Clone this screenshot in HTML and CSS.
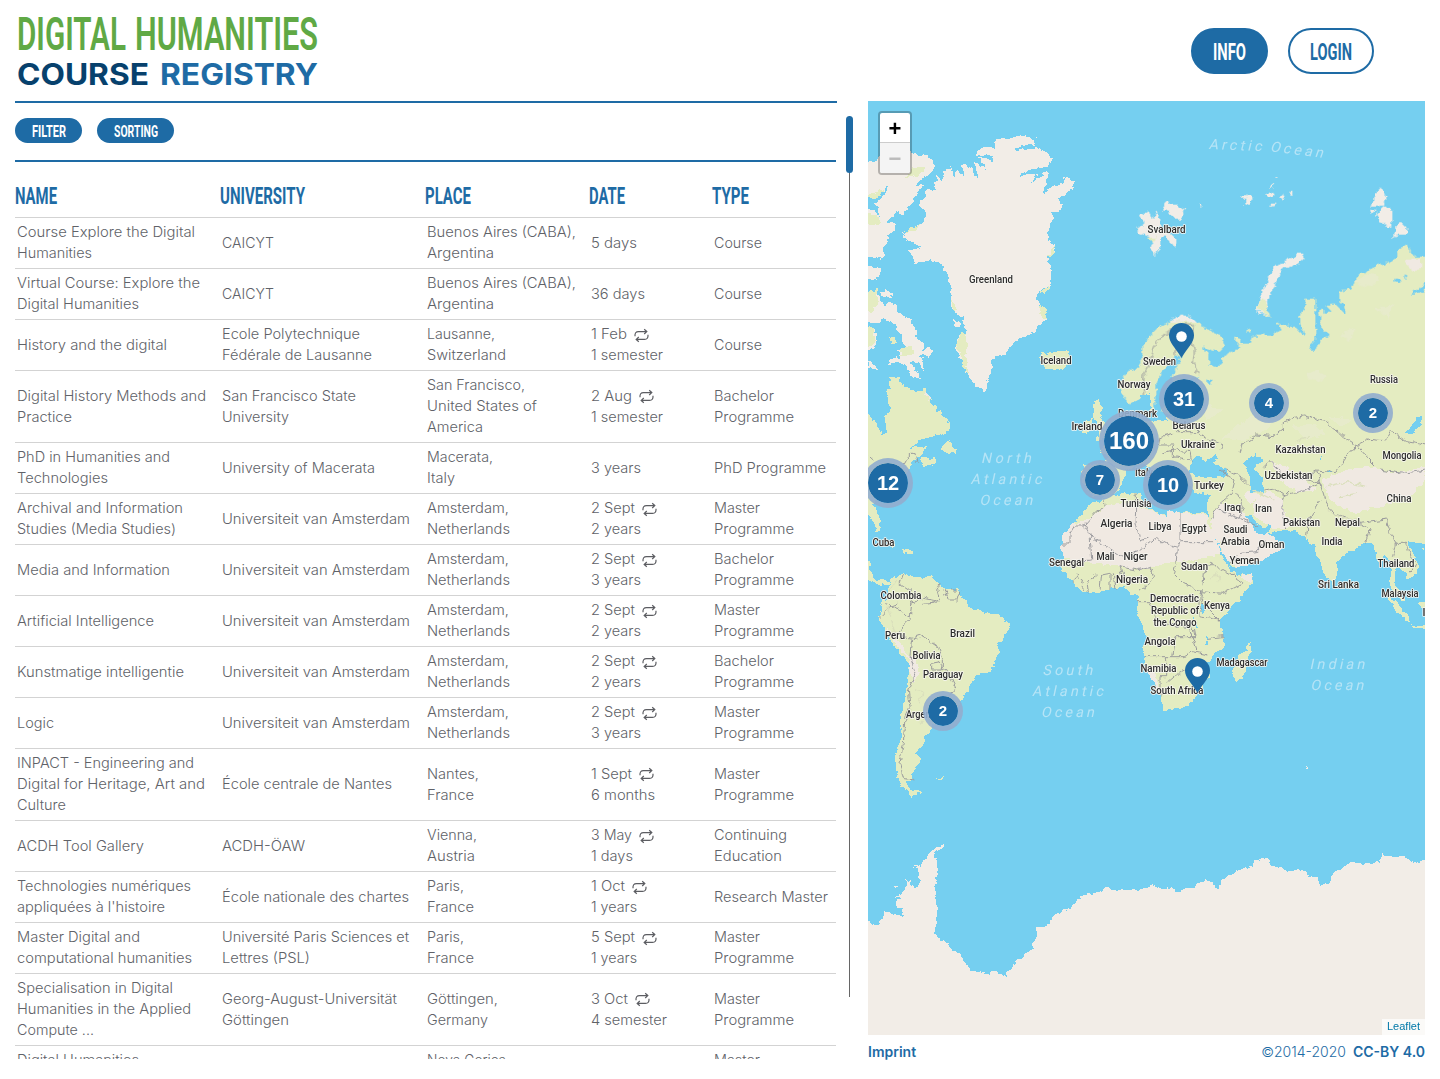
FILE: index.html
```html
<!DOCTYPE html>
<html lang="en">
<head>
<meta charset="utf-8">
<title>Digital Humanities Course Registry</title>
<link rel="stylesheet" href="styles.css">
</head>
<body>
<div class="page">
<main class="left">
  <svg class="logo" viewBox="0 0 304 76" aria-label="Digital Humanities Course Registry">
    <text class="logo-top" x="2" y="37" textLength="109" lengthAdjust="spacingAndGlyphs">DIGITAL</text>
    <text class="logo-top" x="120" y="37" textLength="183" lengthAdjust="spacingAndGlyphs">HUMANITIES</text>
    <text class="logo-course" x="2" y="71.5" textLength="132" lengthAdjust="spacingAndGlyphs">COURSE</text>
    <text class="logo-registry" x="145" y="71.5" textLength="158" lengthAdjust="spacingAndGlyphs">REGISTRY</text>
  </svg>
  <div class="listing">
    <div class="tools">
      <button class="pill"><svg width="34" height="16"><text x="0" y="14" textLength="34" lengthAdjust="spacingAndGlyphs">FILTER</text></svg></button>
      <button class="pill"><svg width="44" height="16"><text x="0" y="14" textLength="44" lengthAdjust="spacingAndGlyphs">SORTING</text></svg></button>
    </div>
    <div class="row head">
      <svg class="h" height="30"><text x="0" y="24" textLength="42" lengthAdjust="spacingAndGlyphs">NAME</text></svg>
      <svg class="h" height="30"><text x="0" y="24" textLength="85" lengthAdjust="spacingAndGlyphs">UNIVERSITY</text></svg>
      <svg class="h" height="30"><text x="0" y="24" textLength="46" lengthAdjust="spacingAndGlyphs">PLACE</text></svg>
      <svg class="h" height="30"><text x="0" y="24" textLength="36" lengthAdjust="spacingAndGlyphs">DATE</text></svg>
      <svg class="h" height="30"><text x="0" y="24" textLength="37" lengthAdjust="spacingAndGlyphs">TYPE</text></svg>
    </div>
    <div id="rows"></div>
  </div>
  <div class="scroll"><div class="thumb"></div></div>
</main>
<aside class="right">
  <nav>
    <button class="big solid"><svg width="34" height="26"><text x="0" y="21.5" textLength="33" lengthAdjust="spacingAndGlyphs">INFO</text></svg></button>
    <button class="big"><svg width="42" height="26"><text x="0" y="21.5" textLength="42" lengthAdjust="spacingAndGlyphs">LOGIN</text></svg></button>
  </nav>
  <div class="map">
    <svg class="world" viewBox="2604 303 1671 2802">
      <defs>
        <filter id="coast" filterUnits="userSpaceOnUse" x="2500" y="200" width="1900" height="3000" color-interpolation-filters="sRGB">
          <feTurbulence type="fractalNoise" baseFrequency=".055" numOctaves="2" seed="4" result="n"/>
          <feDisplacementMap in="SourceGraphic" in2="n" scale="20" xChannelSelector="R" yChannelSelector="G"/>
        </filter>
      </defs>
      <rect x="2604" y="303" width="1671" height="2802" fill="#75cff0"/>
      <g filter="url(#coast)">
      <!-- Greenland, Iceland and the Canadian Arctic -->
      <g transform="translate(2580 285)">
        <path class="ice" d="M372 888L345 870 325 845 305 800 292 775 290 740 298 718 318 712 308 690 312 665 290 655 275 640 272 600 268 550 250 515 232 500 210 497 185 500 165 503 158 485 143 470 180 462 183 452 150 440 128 425 135 410 185 385 198 370 197 345 175 328 195 300 207 283 225 293 222 265 232 243 245 262 255 225 275 215 282 250 290 225 312 245 308 208 325 212 345 240 358 255 350 225 340 195 365 215 375 230 365 200 350 185 385 190 400 198 395 182 345 178 355 162 375 155 408 160 402 145 412 130 440 132 470 120 500 125 525 132 528 148 490 152 455 168 500 165 530 155 548 165 575 190 565 210 545 218 510 225 485 232 470 248 500 238 530 235 515 265 545 245 555 232 565 240 552 295 580 270 610 262 615 248 645 262 635 285 605 305 590 315 610 325 595 350 572 350 580 365 568 400 565 440 580 450 588 470 570 475 562 490 572 510 578 545 575 570 540 585 530 610 545 650 560 670 548 685 520 712 490 725 465 738 440 775 405 785 395 800 385 860 378 885Z"/>
        <path class="green" d="M290 745L300 718 315 712 322 760 318 790 328 850 305 800ZM275 610L288 640 278 645ZM132 410L185 386 165 410ZM541 625L560 650 558 670 540 660ZM540 590L572 570 560 590ZM562 490L580 455 588 470Z"/>
        <path class="ice" d="M0 208L45 200 60 180 100 185 150 168 165 178 180 185 195 175 210 190 224 212 215 235 190 250 165 272 190 265 180 290 155 320 140 350 125 360 110 348 95 365 85 380 105 385 100 410 85 425 78 450 65 460 78 480 65 495 45 485 0 490ZM0 520L50 515 65 525 60 545 45 556 0 550ZM60 588L80 586 95 605 75 608 62 600ZM0 595L50 585 60 610 75 635 90 620 108 635 115 655 150 670 165 700 170 730 190 745 190 768 205 755 221 765 210 785 180 778 200 830 170 800 150 800 182 852 160 845 135 815 115 800 85 808 90 792 120 785 115 765 140 755 125 735 120 710 95 680 70 672 55 685 0 680ZM0 692L45 700 50 745 35 765 0 790ZM24 795L45 812 55 825 35 820 24 822ZM280 672L300 685 298 700 282 692Z"/>
        <path class="green" d="M0 595L50 585 55 620 35 650 0 655ZM0 692L42 700 45 745 0 780ZM0 345L55 362 60 390 0 390ZM135 250L155 220 195 215 180 240ZM0 305L70 285 60 310 0 325ZM92 728L105 728 103 748 90 745ZM125 760L145 755 165 775 140 785 120 780Z"/>
        <path class="sea" d="M10 316L60 302 85 270 75 300 45 325 60 360 10 330Z"/>
        <path class="green" d="M541 770L560 780 585 770 620 768 632 785 628 800 610 820 588 826 560 820 540 808 555 800 541 790Z"/>
        <path class="green" d="M82 848L118 850 130 875 150 880 152 905 172 918 195 885 210 910 232 960H95L80 910 92 880ZM700 918L718 912 728 938 720 965H706Z"/>
      </g>
      <!-- Arctic islands and northern Eurasia -->
      <g transform="translate(3420 285)">
        <path class="green" d="M-65 870L-40 830-5 820 5 790 12 745 30 720 60 695 90 680 120 662 150 665 172 685 210 705 245 725 257 750 240 770 215 765 190 755 205 785 205 810 225 815 245 805 250 780 275 770 305 755 285 740 285 722 298 728 302 745 330 745 335 725 365 720 395 722 425 705 408 678 430 690 470 700 495 725 478 685 480 655 497 640 498 612 525 612 525 680 530 720 505 765 525 768 540 735 570 725 565 710 545 705 538 650 550 635 555 655 575 650 560 630 585 625 618 660 612 630 598 622 598 590 635 583 650 548 700 518 735 505 770 490 775 465 800 448 822 485 900 484V960H0L5 910-30 925-50 905Z"/>
        <path class="ice" d="M90 680L120 659 150 663 172 685 140 680ZM0 358L28 350 35 372 50 348 55 362 62 400 95 418 110 440 105 455 90 445 82 425 65 425 60 455 48 482 40 470 28 460 40 445 30 425 0 415-15 400 10 385ZM65 345L80 322 110 330 135 345 125 370 105 372 95 355ZM178 332L190 328 185 335ZM300 312L325 300 340 305 330 325 310 332 320 312ZM375 300L395 290 405 298 392 310ZM385 275L402 265 395 280ZM405 245L412 242 410 250ZM415 310L428 296 435 308 425 320ZM445 295L460 285 460 302ZM388 330L410 322 400 335ZM355 330L365 328ZM695 335L705 295 722 278 740 310 735 332ZM708 355L730 335 758 345 757 390 745 395 715 375ZM690 340L705 345 696 356ZM758 430L768 400 778 375 803 400 800 418 775 420ZM348 640L362 600 385 555 405 515 430 500 475 475 490 475 494 490 470 510 430 520 415 545 402 575 385 610 380 640 395 665 370 662Z"/>
        <path class="green" d="M350 635L362 610 378 615 380 640 395 665 370 660ZM25 430L50 422 38 440ZM320 705L332 700 330 712ZM770 485L785 455 805 455 800 480Z"/>
        <path class="sand" d="M795 495L840 490 845 520 815 528Z"/>
        <path class="hill" d="M495 845L530 825 560 840 545 860ZM640 560L700 530 720 560 680 575ZM700 640L760 630 750 670ZM600 720L640 700 630 740Z"/>
        <path class="sea" d="M50 865L60 835 90 810 105 780 125 785 120 800 95 840 105 865 180 845 170 858 100 885 60 960H40ZM200 850L215 855 215 870 205 868ZM225 912L238 915 232 920ZM762 550L785 555 778 565 765 562ZM792 540L803 545 797 550ZM812 598L875 550V575L830 598ZM10 905L25 900 18 915Z"/>
        <path class="border" d="M10 905L12 840 30 800 45 750 60 725 80 715 100 700 130 690 160 690M160 690L155 730 163 770 160 800 175 840M105 780L108 740 95 705"/>
      </g>
      <!-- Europe, Asia and Africa -->
      <g transform="translate(3420 1170)">
        <path class="green" d="M-15 75L80 90 100 70V0H900V460L825 458 805 455 820 490 835 520 830 550 810 570 800 555 790 540 770 530 765 545 762 575 775 600 795 625 795 640 780 620 755 600 748 575 755 545 748 510 735 500 715 515 705 480 690 455 665 458 640 480 615 495 592 515 590 550 575 580 560 565 545 530 530 490 525 460 510 465 500 445 475 425 440 422 410 425 385 430 410 450 432 465 410 490 350 515 290 535 275 535 262 505 240 470 215 425 200 395 205 385 200 340 212 315 190 310 165 305 150 290 90 280 60 310 30 230 0 220-40 240-60 300-90 322-150 315-175 270-170 220-115 225-95 205-120 180-80 140Z"/>
        <path class="green" d="M-237 465L-228 430-200 400-175 375-150 340-110 325-60 315-10 308 5 318 0 345 40 360 75 375 100 360 120 365 200 370 215 430 235 480 270 540 285 555 340 548 335 580 290 640 250 680 240 690 245 720 252 750 250 775 215 800 200 830 208 860 190 890 160 930 135 950 70 960 60 920 35 870 15 820 10 790 18 740 0 690-10 665-8 640-10 615-30 615-55 590-95 600-155 610-180 600-200 575-230 545-240 525-228 500Z"/>
        <path class="sand" d="M-237 465L-228 430-200 400-150 385-105 350-30 335 0 350 40 365 75 375 100 360 120 367 200 375 220 435 245 485 220 500 100 515 0 540-100 525-228 505ZM215 390L240 340 280 345 318 380 345 425 385 430 410 450 432 465 410 490 350 515 290 535 262 505 215 425ZM340 340L380 300 430 330 430 370 460 400 440 420 395 415 340 375ZM390 215L440 230 530 300 480 310 430 280ZM550 270L620 240 690 230 760 250 855 230V270L810 320 720 350 640 370 570 330ZM300 555L340 548 330 580ZM20 840L45 850 65 925 35 870ZM330 300L310 320 330 340 365 320Z"/>
        <path class="hill" d="M240 150L300 100 380 50 420 60 380 120 310 150ZM560 80L640 90 600 110ZM460 110L520 100 560 130 500 150ZM180 40L250 60 200 90Z"/>
        <path class="green" d="M283 830L300 790 315 785 328 757 334 780 310 865 290 872 275 860ZM560 565L572 560 590 575 585 592ZM735 610L770 640 808 680 808 697 775 670ZM810 703L855 708 900 710V720L820 710ZM838 640L875 625V665L842 655ZM765 595L795 620 795 640 770 615ZM838 478L850 475 848 488ZM-140 45L-125 30-120 50-130 65-110 90-100 120-105 145-130 155-125 120-140 85ZM-170 100L-145 85-145 120-175 130Z"/>
        <path class="sea" d="M0 20L30 10 35 70 75 65 70 90 30 95 0 90ZM150 250L155 210 175 198 195 215 215 205 232 195 235 205 215 215 262 245 255 262 200 262 170 255ZM310 215L350 192 372 212 345 220 350 245 370 260 368 305 330 305 335 275ZM318 378L335 378 350 400 375 412 395 408 385 425 370 435 345 425 330 400ZM795 130L845 70 840 105 820 130ZM535 210L550 195 542 210ZM560 245L575 243 570 250ZM178 655L195 643 190 668ZM160 680L170 715 162 710ZM198 730L205 765 198 770Z"/>
        <path class="border" d="M120 365V455H220M120 455L112 475 50 443 0 480-60 500-150 435-170 400M112 475L108 520 100 550 130 580 180 605 250 610 310 580 270 550 215 520 190 550 185 590M-150 430L-145 510-200 515M-237 462H-210V430L-195 405H-165L-130 365-105 350-108 330M-15 310L-10 360-12 400 0 450 30 440M-50 560L-60 530-10 540 30 530 40 560 20 590 0 600M-120 600L-115 555-90 550-90 600M-80 550L-75 600M-155 610L-160 570-130 555M-200 575L-190 555-170 570-175 600M-10 635H30L50 690 95 705 160 715 165 740 105 740 95 800H10M95 800L130 800 160 785 205 795M80 800V860H60V920M80 880L115 850 160 825M180 610L180 680 240 690M200 745L250 740M150 720L170 780M180 600L190 640 240 690M215 390L235 345 275 310 285 270 240 240M235 360L300 385 355 410M300 385L310 350 290 310M270 520L300 490 350 485 380 450"/>
        <path class="border" d="M300 190L310 160 350 135 400 140 430 120 430 95 490 78 560 95 610 140 650 165 690 145 740 150 755 125 800 155 855 165M650 165L610 210 590 245 530 240 500 270 440 260 390 215 370 235M650 165L680 200 720 240 790 250 855 240M370 300L400 295 430 310 425 370 440 420M430 320L500 300 540 280 555 330 580 370 660 400 690 420 680 460M540 330L505 390 500 440M660 400L740 390 750 430 770 460 760 500M770 460L800 460 810 500 830 520 810 550M100 70L110 125 180 125 190 140 250 165 240 180M100 130L60 140 55 165 100 165 100 200 150 210M60 190L100 180 150 185 155 215M500 270L545 280M530 240L545 290M450 300L430 320M250 235L300 260 330 290"/>
        <path class="relief" d="M560 290L620 275 680 290M600 320L650 310M560 360L610 385 650 390M780 210L820 200M470 150L510 140M210 570L230 550 240 580M340 300L400 330"/>
      </g>
      <!-- The Americas -->
      <g transform="translate(2580 1170)">
        <path class="green" d="M80 0H198L205 35 240 65 270 100 268 125 235 135 180 150 150 175 195 165 190 195 165 210 150 240 100 265 65 290 50 315 40 340 60 385 62 420 50 420 35 380 0 365V50L50 100 65 135 78 120 75 80 95 60ZM180 205L205 205 230 210 215 230 190 228ZM238 180L270 150 275 165 290 178 290 192 260 185ZM80 450L105 465 90 472ZM125 480L158 482 155 490 130 488ZM10 515L33 518 33 550 50 570 80 570 90 580 60 585 10 560ZM90 575L125 548 150 560 215 560 235 580 260 600 290 598 310 625 325 650 375 665 415 675 447 700 445 720 415 765 412 800 395 845 350 855 330 880 325 905 300 935 250 985 215 1010 213 1030 195 1035 190 1070 168 1090 182 1110 165 1140 155 1170 140 1175 150 1200 185 1210 155 1217 125 1190 110 1155 105 1100 120 1060 125 980 140 900 150 820 130 800 100 765 75 720 57 685 65 640 85 620 85 590ZM228 1165L250 1162 240 1170Z"/>
        <path class="sand" d="M145 800L155 880 180 850 165 800ZM75 710L110 765 150 810 130 770ZM190 15L210 30 198 0Z"/>
        <path class="border" d="M24 195L45 215M130 225L150 190 165 190 170 215M130 552L120 580 150 600 155 640 150 690 115 720 130 740 155 745 185 735 235 770 250 810 250 840 215 840 215 820 240 815 275 870 285 890 270 920M155 745L150 800 165 850 145 900 150 950 135 980 130 1060 120 1120 130 1165 160 1170M75 640L100 650 130 670 150 680M60 680L90 650 115 640M190 640L240 635 230 600 240 580M255 600L265 630 290 630 305 605M270 600L285 600M155 640L190 625 240 635"/>
        <path class="relief" d="M95 690L110 740M80 650L95 680M90 600L110 570M165 900L190 905 175 940M180 1000L200 980"/>
      </g>
      <!-- Antarctica -->
      <g transform="translate(2580 2070)">
        <path class="ice" d="M0 685L24 690 50 705 65 685 75 660 95 670 130 683 125 655 105 645 120 620 100 622 135 600 138 570 150 575 160 598 175 580 178 540 162 535 165 525 182 530 190 515 210 490 250 458 255 465 220 495 230 510 230 560 222 585 232 620 235 665 225 735 265 765 310 805 330 838 375 855 400 845 440 858 455 825 520 775 515 760 530 735 530 708 560 712 585 672 640 650 645 630 685 610 730 602 742 588 752 598 800 600 855 598 870 585 910 592 955 604 1000 590 1035 567 1060 587 1080 595 1088 570 1130 545 1175 530 1180 512 1220 505 1232 525 1260 538 1340 546 1345 560 1375 565 1380 590 1410 575 1420 552 1475 515 1515 522 1560 515 1568 487 1572 500 1625 500 1675 522 1695 508 1730 500V1080H0ZM100 592L110 592 108 598ZM266 450L270 450 270 455ZM1335 228L1345 232 1343 238 1335 236Z"/>
      </g>
      </g>
      <g id="labels"></g>
    </svg>
    <div id="pins"></div>
    <div class="zoomctl"><span>+</span><span class="off">−</span></div>
    <div class="credit">Leaflet</div>
  </div>
  <footer><b>Imprint</b><span class="copy">©2014-2020</span><b>CC-BY 4.0</b></footer>
</aside>
</div>
<script src="app.js"></script>
</body>
</html>
```
FILE: styles.css
```css
* { box-sizing: border-box; }
body { margin: 0; background: #fff; font-family: Inter, "Liberation Sans", sans-serif; }
.page { display: flex; height: 1079px; overflow: hidden; }
.left { width: 868px; padding: 13px 15px 0; display: grid; grid-template-columns: 822px 16px; grid-template-rows: 76px 958px; row-gap: 12px; }
svg { overflow: visible; }
.logo { grid-column: 1 / 3; width: 304px; height: 76px; }
.logo text { font-weight: 700; }
.logo .logo-top { font-family: Roboto, sans-serif; font-size: 46.5px; font-weight: 600; fill: #60a945; }
.logo-course, .logo-registry { font-size: 29.5px; }
.logo-course { fill: #07416d; }
.logo-registry { fill: #1e6ba5; }
.listing { overflow: hidden; border-top: 2px solid #1e6ba5; }
.tools { display: flex; align-items: flex-start; gap: 15px; width: 821px; height: 59px; padding-top: 15px; border-bottom: 2px solid #1e6ba5; }
button { font: inherit; border: 0; display: flex; align-items: center; justify-content: center; }
button text, .h text { font-family: Roboto, sans-serif; font-weight: 700; fill: currentColor; }
.pill { height: 25px; padding: 0 16.5px; border-radius: 13px; background: #1e6ba5; color: #fff; font-size: 17px; }
.row { display: grid; grid-template-columns: 205px 205px 164px 123px 124px; align-items: center; width: 821px; border-bottom: 1px solid #d3d3d3; }
.head { height: 56px; color: #1e6ba5; padding-top: 11px; }
.h { width: 120px; font-size: 24px; }
.cell { padding: 4px 2px; font-size: 14px; line-height: 21px; font-weight: 300; color: #66686e; white-space: nowrap; }
.line { display: flex; height: 21px; align-items: center; }
.line svg { display: block; overflow: visible; }
.line text { fill: #606268; }
.repeat { margin: 1px 0 0 7px; fill: none; stroke: #5c5d62; stroke-width: 1.2; }
.scroll { margin: 15px 0 0 9px; width: 7px; height: 881px; background: linear-gradient(#666, #666) 3px 0 / 1px 100% no-repeat; }
.thumb { height: 57px; border-radius: 4px; background: #1e6ba5; }
.right { width: 557px; }
nav { display: flex; justify-content: flex-end; gap: 20px; padding: 28px 51px 0 0; height: 101px; }
.big { width: 86px; height: 46px; padding: 0; border: 2px solid #1e6ba5; border-radius: 23px; background: #fff; color: #1e6ba5; font-size: 24px; }
.solid { width: 77px; background: #1e6ba5; color: #fff; }
.map { position: relative; height: 934px; overflow: hidden; }
.world { display: block; width: 557px; height: 934px; shape-rendering: crispEdges; overflow: hidden; }
.ice { fill: #f2ede7; }
.green { fill: #e4ecc1; }
.sand { fill: #f0e9e2; }
.hill { fill: #e7ebcb; }
.sea { fill: #75cff0; }
.border { fill: none; stroke: #96969a; stroke-width: 2.8; shape-rendering: auto; }
.relief { fill: none; stroke: #dadfbc; stroke-width: 4; shape-rendering: auto; }
.country { font: 500 31px Roboto, sans-serif; fill: #2c2c2c; stroke: #f8f7f2; stroke-width: 5px; stroke-linejoin: round; paint-order: stroke; }
.ocean { font: 400 43px Roboto, sans-serif; fill: #b6e4f6; }
.cluster { position: absolute; display: flex; align-items: center; justify-content: center; border-radius: 50%; background: #1e6ba5; background-clip: padding-box; border: 5px solid rgba(146, 174, 206, .92); color: #fff; font-family: "Liberation Sans", sans-serif; font-weight: 700; line-height: 1; padding-bottom: 1px; }
.pin { position: absolute; width: 25px; height: 35px; }
.zoomctl { position: absolute; left: 10px; top: 10px; width: 34px; height: 64px; border: 2px solid rgba(0, 0, 0, .25); border-radius: 4px; background: #fff; background-clip: padding-box; font: 700 22px/31px "Liberation Sans", sans-serif; text-align: center; overflow: hidden; }
.zoomctl span { display: block; height: 30px; border-bottom: 1px solid #ccc; }
.zoomctl .off { border: 0; background: #f4f4f4; color: #bbb; }
.credit { position: absolute; right: 0; bottom: 0; width: 43px; height: 16px; background: rgba(255, 255, 255, .7); color: #0078a8; font: 11px/15px "Liberation Sans", sans-serif; text-align: center; }
footer { display: flex; padding-top: 7px; font-size: 14px; line-height: 20px; color: #1e6ba5; }
footer b { font-weight: 600; }
.copy { margin: 0 7px 0 auto; font-weight: 300; }
```
FILE: app.js
```js
// Each cell is a list of [text, width] lines; a trailing 1 adds the recurring mark.
const UVA = [["Universiteit van Amsterdam", 188]];
const AMS = [["Amsterdam,", 82], ["Netherlands", 83]];
const MA = [["Master", 46], ["Programme", 80]];
const BA = [["Bachelor", 60], ["Programme", 80]];
const CO = [["Course", 48]];
const FR = ["France", 47];
const S = ["2 Sept", 44, 1];
const BUE = [["Buenos Aires (CABA),", 149], ["Argentina", 67]];
const rows = [
  [[["Course Explore the Digital", 178], ["Humanities", 75]], [["CAICYT", 52]], BUE, [["5 days", 46]], CO],
  [[["Virtual Course: Explore the", 183], ["Digital Humanities", 122]], [["CAICYT", 52]], BUE, [["36 days", 54]], CO],
  [[["History and the digital", 150]], [["Ecole Polytechnique", 138], ["Fédérale de Lausanne", 150]], [["Lausanne,", 68], ["Switzerland", 79]], [["1 Feb", 36, 1], ["1 semester", 72]], CO],
  [[["Digital History Methods and", 189], ["Practice", 55]], [["San Francisco State", 134], ["University", 67]], [["San Francisco,", 98], ["United States of", 110], ["America", 56]], [["2 Aug", 41, 1], ["1 semester", 72]], BA],
  [[["PhD in Humanities and", 153], ["Technologies", 91]], [["University of Macerata", 153]], [["Macerata,", 66], ["Italy", 28]], [["3 years", 50]], [["PhD Programme", 112]]],
  [[["Archival and Information", 166], ["Studies (Media Studies)", 159]], UVA, AMS, [S, ["2 years", 50]], MA],
  [[["Media and Information", 153]], UVA, AMS, [S, ["3 years", 50]], BA],
  [[["Artificial Intelligence", 137]], UVA, AMS, [S, ["2 years", 50]], MA],
  [[["Kunstmatige intelligentie", 167]], UVA, AMS, [S, ["2 years", 50]], BA],
  [[["Logic", 37]], UVA, AMS, [S, ["3 years", 50]], MA],
  [[["INPACT - Engineering and", 177], ["Digital for Heritage, Art and", 188], ["Culture", 49]], [["École centrale de Nantes", 170]], [["Nantes,", 52], FR], [["1 Sept", 41, 1], ["6 months", 64]], MA],
  [[["ACDH Tool Gallery", 127]], [["ACDH-ÖAW", 83]], [["Vienna,", 50], ["Austria", 48]], [["3 May", 41, 1], ["1 days", 42]], [["Continuing", 73], ["Education", 68]]],
  [[["Technologies numériques", 174], ["appliquées à l'histoire", 148]], [["École nationale des chartes", 187]], [["Paris,", 37], FR], [["1 Oct", 34, 1], ["1 years", 46]], [["Research Master", 114]]],
  [[["Master Digital and", 123], ["computational humanities", 175]], [["Université Paris Sciences et", 187], ["Lettres (PSL)", 88]], [["Paris,", 37], FR], [["5 Sept", 44, 1], ["1 years", 46]], MA],
  [[["Specialisation in Digital", 156], ["Humanities in the Applied", 174], ["Compute ...", 77]], [["Georg-August-Universität", 175], ["Göttingen", 67]], [["Göttingen,", 71], ["Germany", 61]], [["3 Oct", 37, 1], ["4 semester", 76]], MA],
  [[["Digital Humanities", 122], ["Master", 46]], [], [["Nova Gorica,", 83], ["Slovenia", 58]], [], MA]
];
const icon = '<svg class="repeat" width="15" height="13" viewBox="0 0 15 13"><path d="M1 7.2Q.6 2.6 4.5 2.6H12.6M10.2 .2L12.8 2.6 10.2 5M14 5.8Q14.4 10.4 10.5 10.4H2.4M4.8 8L2.2 10.4 4.8 12.8"/></svg>';
const line = ([t, w, r], y) => `<div class="line"><svg width="${w}" height="21"><text x="0" y="${y}" textLength="${w}" lengthAdjust="spacingAndGlyphs">${t}</text></svg>${r ? icon : ""}</div>`;
// Cells shorter than their row sit on a half pixel, so their baseline is rounded up.
document.getElementById("rows").innerHTML = rows.map(r => {
  const tall = Math.max(...r.map(c => c.length));
  return `<div class="row">${r.map(c => `<div class="cell">${c.map(l => line(l, (tall - c.length) % 2 ? 14.5 : 15)).join("")}</div>`).join("")}</div>`;
}).join("");

// Country labels: text, centre x, baseline y, width.
const countries = [
  ["Greenland", 991, 282.5, 44], ["Iceland", 1056, 364, 31], ["Svalbard", 1166.5, 232.5, 38], ["Sweden", 1159.5, 364.5, 33],
  ["Norway", 1134, 387.5, 33], ["Russia", 1384, 383, 28], ["Denmark", 1137.5, 416.5, 39], ["Ireland", 1087, 429.5, 31],
  ["Belarus", 1189, 428.5, 33], ["Ukraine", 1198, 447.5, 34], ["Kazakhstan", 1300.5, 453, 50], ["Mongolia", 1402, 458.5, 39],
  ["Uzbekistan", 1288.5, 478.5, 48], ["Turkey", 1209, 489, 30], ["Italy", 1144, 475.5, 18], ["China", 1399, 501.5, 25],
  ["Tunisia", 1136, 506.5, 31], ["Algeria", 1116.5, 526.5, 32], ["Libya", 1160, 529.5, 23], ["Egypt", 1194, 531.5, 25],
  ["Iraq", 1232.5, 510.5, 17], ["Iran", 1263.5, 511.5, 17], ["Pakistan", 1301.5, 526, 37], ["Nepal", 1347.5, 526, 25],
  ["Saudi", 1235.5, 533, 24], ["Arabia", 1235.5, 545, 29], ["Oman", 1271.5, 547.5, 26], ["India", 1332, 545, 21],
  ["Yemen", 1244.5, 564, 30], ["Thailand", 1396, 566.5, 37], ["Sri Lanka", 1338.5, 588, 41], ["Malaysia", 1400, 597, 37],
  ["Cuba", 883.5, 545.5, 22], ["Mali", 1105.5, 559.5, 18], ["Niger", 1135.5, 559.5, 24], ["Senegal", 1066.5, 566, 35],
  ["Nigeria", 1132, 582.5, 32], ["Sudan", 1194.5, 570, 27], ["Democratic", 1174.5, 601.5, 49], ["Republic of", 1175, 613.5, 48],
  ["the Congo", 1175, 625.5, 43], ["Kenya", 1217, 608.5, 26], ["Angola", 1160, 644.5, 31], ["Namibia", 1158.5, 671.5, 36],
  ["Madagascar", 1242, 666, 51], ["South Africa", 1177, 694, 53], ["Colombia", 901, 598.5, 41], ["Peru", 895, 638.5, 20],
  ["Brazil", 962.5, 637, 25], ["Bolivia", 926.5, 659, 28], ["Paraguay", 943, 678, 40], ["Argentina", 926, 717.5, 40], ["I", 1424, 616, 3]
];
// Ocean labels: the last value is a rotation in degrees.
const oceans = [
  ["North", 1006, 463, 50, 0], ["Atlantic", 1006, 484, 71, 0], ["Ocean", 1006, 505, 53, 0], ["South", 1067.5, 675, 50, 0],
  ["Atlantic", 1067.5, 696, 71, 0], ["Ocean", 1067.5, 717, 53, 0], ["Indian", 1337, 669, 55, 0], ["Ocean", 1337, 690, 53, 0],
  ["Arctic", 1235, 150, 53, 2], ["Ocean", 1296, 154.5, 53, 7]
];
document.getElementById("labels").innerHTML =
  oceans.map(([t, x, y, w, a]) => `<text class="ocean" x="${-w / 2 * 3}" y="0" textLength="${w * 3}" transform="translate(${x * 3} ${y * 3}) rotate(${a}) skewX(-12)">${t}</text>`).join("") +
  countries.map(([t, x, y, w]) => `<text class="country" x="${(x - w / 2) * 3}" y="${y * 3}" textLength="${w * 3}" lengthAdjust="spacingAndGlyphs">${t}</text>`).join("");

// Markers are placed relative to the map's top left corner.
const clusters = [[12, 888, 483, 50, 20], [7, 1100, 480, 40, 15], [160, 1129, 441, 60, 24], [10, 1168, 485, 50, 20],
  [31, 1184, 399, 50, 20], [4, 1269, 403, 40, 15], [2, 1373, 413, 40, 15], [2, 943, 711, 40, 15]];
const pins = [[1181.5, 323], [1197.5, 658]];
document.getElementById("pins").innerHTML =
  clusters.map(([n, x, y, d, f]) => `<div class="cluster" style="left:${x - d / 2 - 868}px;top:${y - d / 2 - 101}px;width:${d}px;height:${d}px;font-size:${f}px">${n}</div>`).join("") +
  pins.map(([x, y]) => `<svg class="pin" style="left:${x - 12.5 - 868}px;top:${y - 101}px" viewBox="0 0 25 35"><path fill="#1e6ba5" d="M12.5 0A12.5 12.5 0 0 1 25 12.5C25 20 18 25 12.5 35 7 25 0 20 0 12.5A12.5 12.5 0 0 1 12.5 0Z"/><circle cx="12.5" cy="13.5" r="5.3" fill="#fff"/></svg>`).join("");
```
